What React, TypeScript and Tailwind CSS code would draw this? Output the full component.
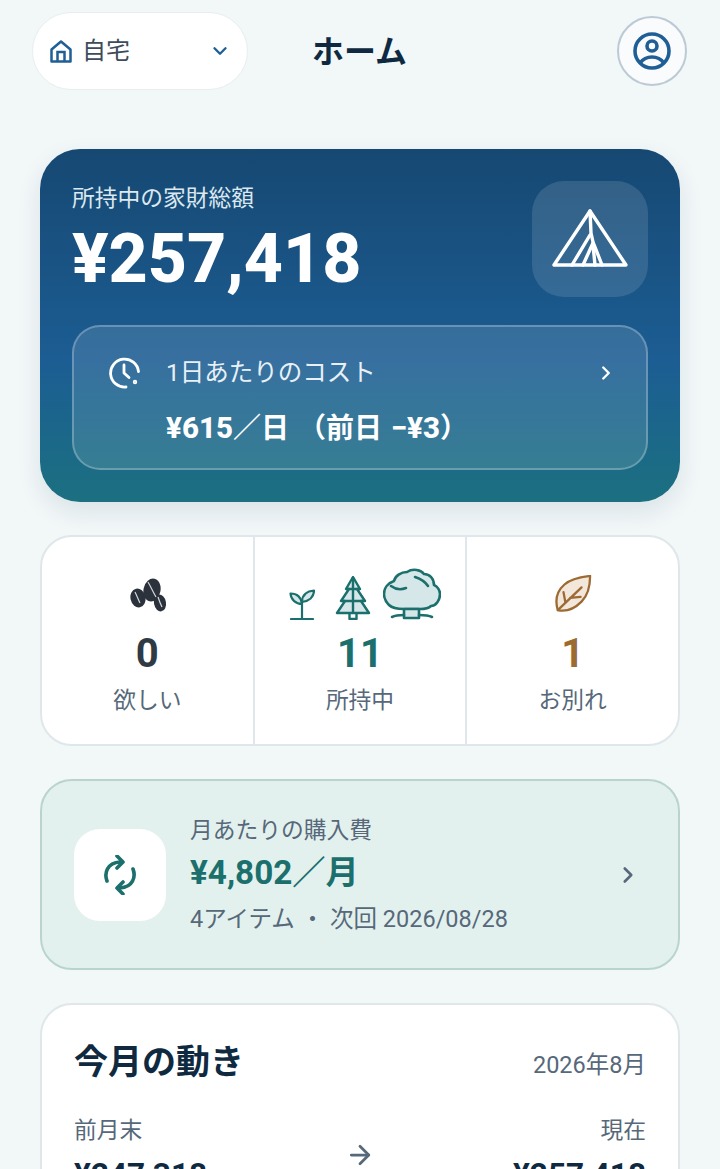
import React from 'react';
import { ChevronDown, ChevronRight, ArrowRight } from 'lucide-react';

const HomeIcon = () => (
    <svg width="24" height="24" viewBox="0 0 24 24" fill="none" stroke="#1f5f96" strokeWidth="2.5" strokeLinejoin="miter" className="shrink-0"><path d="M2.500 10.500 12 2.500l9.500 8V22.500h-19z" strokeLinejoin="round" /><path d="M8.500 22.500V13h7v9.500" /></svg>
);
const UserIcon = () => (
    <svg width="40" height="40" viewBox="0 0 40 40" fill="none" stroke="#1f5f96" strokeWidth="3.6"><circle cx="20" cy="20" r="17" /><circle cx="20" cy="15" r="5" /><path d="M8 32c3-4 7-6 12-6s9 2 12 6" /></svg>
);
const TentIcon = () => (
    <svg width="76" height="60" viewBox="0 0 76 60" fill="none" stroke="#fff" strokeWidth="3.4" strokeLinecap="round" strokeLinejoin="round"><path d="M38 2 2 56h72z" /><path d="M38 2l1 22 2 9 9 23" /><path d="M38 26 20 56" /><path d="M41 34 31 56" /><path d="M41 36l2 20" /></svg>
);
const ClockIcon = () => (
    <svg width="32" height="32" viewBox="0 0 32 32" fill="none" stroke="#fff" strokeWidth="2.8" strokeLinecap="round" strokeLinejoin="round"><path d="M29.500 14.500A14 14 0 1 0 17 30" /><path d="M15 8v8l5 4.500" /><circle cx="26" cy="25" r="0.8" fill="#fff" /></svg>
);
const BeansIcon = () => (
    <svg width="40" height="36" viewBox="0 0 40 36" className="shrink-0 mb-[7px] ml-[3px]">
        <ellipse cx="9" cy="21" rx="7.500" ry="9.500" fill="#2b323b" transform="rotate(-12 9 21)" />
        <ellipse cx="23" cy="13" rx="8.500" ry="11.500" fill="#2b323b" transform="rotate(12 23 13)" />
        <ellipse cx="31" cy="26" rx="6" ry="8.500" fill="#2b323b" transform="rotate(-10 31 26)" />
        <path d="M6 15c2 4 3 7 5 11M19 5c3 5 5 10 8 15M29 20c1 3 2 6 4 10" fill="none" stroke="#d5d8da" strokeWidth="1.2" />
    </svg>
);
const SproutIcon = () => (
    <svg width="26" height="32" viewBox="0 0 26 32" fill="none" stroke="#1b6f6c" strokeWidth="2.2" strokeLinecap="round" strokeLinejoin="round" className="shrink-0"><path d="M2 31h22M13 31V14" /><path d="M13 16C7 16 2 12 1.500 5.500 8 5.500 12 9 13 16z" fill="#d5e7e8" /><path d="M13 14c0-7 5-11 12-11.500C25 9 20 13 13 14z" fill="#d5e7e8" /></svg>
);
const PineIcon = () => (
    <svg width="36" height="44" viewBox="0 0 34 44" fill="none" stroke="#1b6f6c" strokeWidth="2.4" strokeLinejoin="round" className="shrink-0 ml-[20px]"><path d="M17 1 10 13h3L5 25h4L1 37h32l-8-12h4l-8-12h3z" fill="#d5e7e8" /><path d="M13.500 37v6h7v-6M17 1v36M10 13h14M7 25h20" /></svg>
);
const TreeIcon = () => (
    <svg width="58" height="52" viewBox="0 0 58 52" fill="none" stroke="#1b6f6c" strokeWidth="2.6" strokeLinecap="round" strokeLinejoin="round" className="shrink-0 ml-[12px]"><path d="M21 41h16c6 0 9-1 11-3 5 0 9-6 9-12 0-4-3-8-6-9 0-6-4-11-10-11-3-4-11-6-17-2-6 0-12 4-13 9C5 15 1 20 1 26c0 6 3 9 5 11 3 3 9 4 15 4z" fill="#d5e7e8" /><path d="M21 41v9h15v-9z" fill="#d5e7e8" /><path d="M9 49c4-2 8-2 12-2M36 47c4 0 9 0 13 2M8 18c4 3 10 4 15 2M32 9c3 1 9 3 13 9" /></svg>
);
const LeafIcon = () => (
    <svg width="38" height="38" viewBox="0 0 38 40" fill="none" stroke="#9c6a33" strokeWidth="2.4" strokeLinecap="round" strokeLinejoin="round" className="shrink-0 mb-[7px]"><path d="M3 37c-3-10-1-20 7-27C17 4 27 2 37 1c0 10-2 20-9 27-7 7-16 11-25 9z" fill="#f3e6da" /><path d="M3 37 28 13M11 29 9 18M16 24l11-1" /></svg>
);
const SyncIcon = () => (
    <svg width="32" height="40" viewBox="0 0 32 40" fill="none" stroke="#1b6f6c" strokeWidth="3.6" strokeLinecap="round" strokeLinejoin="round"><path d="M3 26C0 18 3 8 16 7" /><path d="M13 1l6 6-6 6" /><path d="M29 14c3 8 0 18-13 19" /><path d="M19 27l-6 6 6 6" /></svg>
);

const StatCell: React.FC<{ icon: React.ReactNode; value: string; label: string; valueClass: string; border?: boolean }> = ({ icon, value, label, valueClass, border }) => (
    <div className={`flex-1 flex flex-col items-center ${border ? 'border-r-2 border-[#dfe7ea]' : ''}`}>
        <div className="h-[54px] mt-[29px] flex items-end justify-center">{icon}</div>
        <div className={`text-[40px] leading-[48px] mt-[10px] font-bold ${valueClass}`}>{value}</div>
        <div className="text-[22.75px] leading-[32px] mt-[7px] text-[#566879]">{label}</div>
    </div>
);

const App: React.FC = () => {
    return (
        <div className="h-[1169px] overflow-hidden bg-[#f2f7f8] font-['Roboto','Noto_Sans_CJK_JP',sans-serif]">
            <header className="flex items-center pt-3 pl-8 pr-[33px]">
                <div className="w-[216px] h-[78px] bg-white rounded-full border border-[#e8eef0] flex items-center pl-[16px] pr-[16px] text-[#3d4c5a] text-[24px]">
                    <HomeIcon />
                    <span className="ml-[9px]">自宅</span>
                    <ChevronDown className="ml-auto text-[#1f5f96]" size={22} strokeWidth={2.6} />
                </div>
                <h1 className="ml-[64px] text-[32px] leading-[48px] pt-[2px] font-bold text-[#0f2a40]">ホーム</h1>
                <div className="ml-auto w-[70px] h-[70px] rounded-full border-2 border-[#bccad6] bg-white/50 flex items-center justify-center"><UserIcon /></div>
            </header>

            <main className="px-10 pt-[59px] flex flex-col gap-[33px]">
                <section className="h-[353px] rounded-[40px] p-8 bg-gradient-to-b from-[#164872] via-[#1c5d93] via-60% to-[#1c7080] shadow-[0_10px_24px_rgba(20,60,90,0.10)] flex flex-col">
                    <div className="flex justify-between h-[144px]">
                        <div>
                            <div className="text-[22.75px] leading-[34px] mt-[1px] text-[#dce8f0]">所持中の家財総額</div>
                            <div className="text-[68px] leading-[80px] font-extrabold text-white mt-[3px]">¥257,418</div>
                        </div>
                        <div className="w-[116px] h-[116px] rounded-[32px] bg-white/12 flex items-center justify-center"><TentIcon /></div>
                    </div>
                    <div className="h-[145px] rounded-[28px] border-2 border-white/25 bg-white/12 pl-[35px] pr-[29px] flex flex-col">
                        <div className="flex items-center h-[44px] mt-[24px]">
                            <ClockIcon />
                            <span className="ml-[25px] text-[24.5px] text-[#e8f0f5]">1日あたりのコスト</span>
                            <ChevronRight className="ml-auto text-white" size={22} strokeWidth={2.6} />
                        </div>
                        <div className="ml-[57px] mt-[9px] text-[28px] leading-[44px] font-bold text-white whitespace-pre">
                            <span className="font-extrabold text-[29.5px]">¥615</span>／日<span className="text-[36px]"> </span>（前日<span className="text-[36px]"> </span><span className="font-extrabold text-[29.5px]">−¥3</span>）
                        </div>
                    </div>
                </section>

                <section className="h-[211px] bg-white rounded-[32px] border-2 border-[#dfe7ea] flex">
                    <StatCell border icon={<BeansIcon />} value="0" label="欲しい" valueClass="text-[#2f3a44]" />
                    <StatCell border icon={<div className="flex items-end ml-[10px]"><SproutIcon /><PineIcon /><TreeIcon /></div>} value="11" label="所持中" valueClass="text-[#1b6f6c]" />
                    <StatCell icon={<LeafIcon />} value="1" label="お別れ" valueClass="text-[#9c6a33]" />
                </section>

                <section className="h-[191px] rounded-[32px] border-2 border-[#b9d5cb] bg-[#e3f1ee] flex items-center pl-[32px] pr-[37px]">
                    <div className="w-[92px] h-[92px] rounded-[26px] bg-white flex items-center justify-center"><SyncIcon /></div>
                    <div className="ml-[24px]">
                        <div className="text-[22.75px] leading-[32px] text-[#566879]">月あたりの購入費</div>
                        <div className="text-[33.25px] leading-[48px] font-bold text-[#1b6f6c] mt-[2px]">¥4,802／月</div>
                        <div className="text-[23.5px] leading-[32px] text-[#566879] mt-[6px]">4アイテム ・ 次回 2026/08/28</div>
                    </div>
                    <ChevronRight className="ml-auto text-[#566879]" size={26} strokeWidth={2.4} />
                </section>

                <section className="bg-white rounded-[32px] border-2 border-[#dfe7ea] px-[32px] pt-[30px] pb-8">
                    <div className="flex items-center justify-between">
                        <h2 className="text-[34px] leading-[48px] font-bold text-[#0f2a40]">今月の動き</h2>
                        <span className="text-[23.5px] leading-[48px] pt-[6px] text-[#566879]">2026年8月</span>
                    </div>
                    <div className="flex items-center justify-between mt-[26px]">
                        <div>
                            <div className="text-[22.75px] leading-[32px] text-[#566879]">前月末</div>
                            <div className="text-[31.5px] leading-[40px] font-bold text-[#0f2a40] mt-[8px]">¥247,318</div>
                        </div>
                        <ArrowRight className="text-[#566879]" size={30} strokeWidth={2.2} />
                        <div className="text-right">
                            <div className="text-[22.75px] leading-[32px] text-[#566879]">現在</div>
                            <div className="text-[31.5px] leading-[40px] font-bold text-[#0f2a40] mt-[8px]">¥257,418</div>
                        </div>
                    </div>
                </section>
            </main>
        </div>
    );
};

export default App;
